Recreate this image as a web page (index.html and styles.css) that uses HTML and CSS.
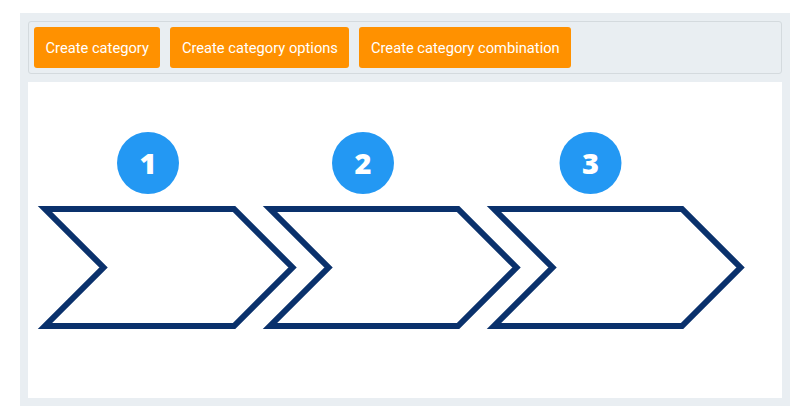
FILE: index.html
```html
<!DOCTYPE html>
<html>
<head>
<meta charset="utf-8">
<link rel="stylesheet" href="styles.css">
</head>
<body>
<div class="panel">
  <div class="toolbar">
    <button class="btn">Create category</button>
    <button class="btn">Create category options</button>
    <button class="btn">Create category combination</button>
  </div>
  <div class="canvas">
    <svg class="diagram" width="754" height="316" viewBox="28 82 754 316" xmlns="http://www.w3.org/2000/svg">
      <g fill="none" stroke="#0a316c" stroke-width="6" stroke-linejoin="miter">
        <polygon points="45,209 234,209 292.5,267.5 234,326 45,326 103.5,267.5"/>
        <polygon points="270,209 458,209 516.5,267.5 458,326 270,326 328.5,267.5"/>
        <polygon points="494,209 682,209 740.5,267.5 682,326 494,326 552.5,267.5"/>
      </g>
      <g fill="#2398f3">
        <circle cx="148" cy="163" r="31"/>
        <circle cx="363" cy="163" r="31"/>
        <circle cx="590.5" cy="163" r="31"/>
      </g>
      <g class="num" fill="#ffffff" text-anchor="middle">
        <text x="148" y="173.5">1</text>
        <text x="363" y="173.5">2</text>
        <text x="590.5" y="173.5">3</text>
      </g>
    </svg>
  </div>
</div>
</body>
</html>
```
FILE: styles.css
```css
html, body {
  margin: 0;
  padding: 0;
  background: #ffffff;
}

.panel {
  margin: 13px 10px 0 20px;
  width: 754px;
  padding: 8px;
  background: #e9eef2;
  display: flex;
  flex-direction: column;
  gap: 8px;
}

.toolbar {
  display: flex;
  gap: 10px;
  padding: 5px;
  border: 1px solid #d4dade;
  border-radius: 3px;
  background: #e9eef2;
}

.btn {
  height: 41px;
  padding: 0 11.5px;
  border: none;
  border-radius: 3px;
  background: #ff9100;
  color: #ffffff;
  font-family: Roboto, "Liberation Sans", sans-serif;
  font-size: 14.7px;
  font-weight: 400;
  cursor: pointer;
}

.canvas {
  height: 316px;
  background: #ffffff;
}

.diagram {
  display: block;
}

.num {
  font-family: "Open Sans", "DejaVu Sans", sans-serif;
  font-size: 29px;
  font-weight: 800;
}
```
